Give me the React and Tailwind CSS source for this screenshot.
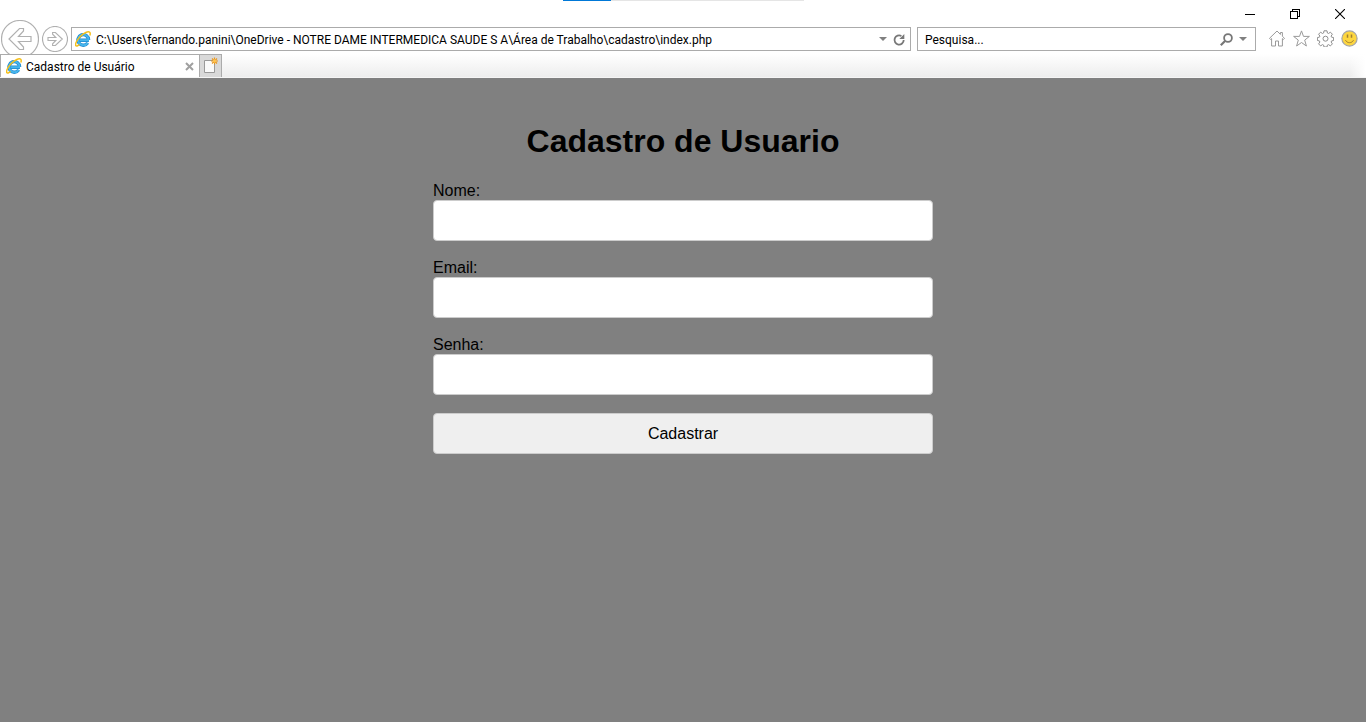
import React from "react";

function BrowserLogo() {
  return (
    <svg viewBox="0 0 16 16" className="size-4 shrink-0" fill="none" aria-hidden="true">
      <path d="M13.900 9.300H4.500M13.600 8.900a5.300 5.300 0 1 0-.9 3" stroke="#1e88cf" strokeWidth="3.400" />
      <path d="M13.900 9.300H4.500M13.600 8.900a5.300 5.300 0 1 0-.9 3" stroke="#45b5ec" strokeWidth="2" />
      <path
        d="M4.500 13.500c-1.700 1.600-3.200 2-3.700 1.200C-.1 13.100 1.900 8.900 5.300 5.400 8.900 1.800 13.200-.1 14.700 1.300c.7.700.6 1.900.1 3.300"
        stroke="#f5bf1b"
        strokeWidth="1.500"
      />
    </svg>
  );
}

function CircleArrow({ className, r, flip }) {
  const c = r + 0.5;
  const size = c * 2;
  return (
    <svg viewBox={`0 0 ${size} ${size}`} className={className} fill="none" stroke="#b0b0b0" aria-hidden="true">
      <circle cx={c} cy={c} r={r} fill="#fff" strokeWidth="1.200" />
      {flip ? (
        <path d="M6 11.500h7.800L10.600 8.200V6.500h2.800l6.900 6.500-6.900 6.500h-2.800v-1.700l3.200-3.300H6z" strokeWidth="1.100" />
      ) : (
        <path d="M30 16.500H17.500L22.500 11V8.500h-4L8 19l10.500 10.500h4V27l-5-5.500H30z" strokeWidth="1.200" />
      )}
    </svg>
  );
}

function Caret() {
  return (
    <svg viewBox="0 0 8 4" className="h-1 w-2" aria-hidden="true">
      <path d="M0 0h8L4 4z" fill="#808080" />
    </svg>
  );
}

function WindowControls() {
  return (
    <div className="flex h-5 items-end justify-end gap-[35px] pr-[21px] pb-px">
      <button type="button" aria-label="Minimizar">
        <svg viewBox="0 0 10 10" className="block size-[10px]" shapeRendering="crispEdges">
          <path d="M0 5.500h10" stroke="#000" />
        </svg>
      </button>
      <button type="button" aria-label="Restaurar">
        <svg viewBox="0 0 10 10" className="block size-[10px]" fill="none" stroke="#000" shapeRendering="crispEdges">
          <path d="M.5 2.500h7v7h-7zM2.500 2.500v-2h7v7h-2" />
        </svg>
      </button>
      <button type="button" aria-label="Fechar">
        <svg viewBox="0 0 10 10" className="block size-[10px]" stroke="#000" strokeWidth="1.100">
          <path d="M0 0l10 10M10 0L0 10" />
        </svg>
      </button>
    </div>
  );
}

function Toolbar() {
  return (
    <div className="flex h-[34px] items-start overflow-hidden pr-2 pl-px">
      <button type="button" aria-label="Voltar" className="shrink-0">
        <CircleArrow r={18.5} className="block size-[38px]" />
      </button>
      <button type="button" aria-label="Avançar" className="mt-[6px] ml-[3px] shrink-0">
        <CircleArrow r={12.5} flip className="block size-[26px]" />
      </button>
      <div className="mt-[7px] ml-[3px] flex h-6 flex-1 items-center border border-[#ababab] bg-white pr-[4px] pl-[3px]">
        <BrowserLogo />
        <input
          type="text"
          aria-label="Endereço"
          defaultValue="C:\Users\fernando.panini\OneDrive - NOTRE DAME INTERMEDICA SAUDE S A\Área de Trabalho\cadastro\index.php"
          className="ml-[5px] min-w-0 flex-1 bg-transparent pt-[2px] outline-none"
        />
        <button type="button" aria-label="Mostrar endereços" className="flex">
          <Caret />
        </button>
        <button type="button" aria-label="Atualizar" className="ml-[6px]">
          <svg viewBox="0 0 13 13" className="block size-[13px]" aria-hidden="true">
            <path d="M10.700 7a4.600 4.600 0 1 1-2.300-4" fill="none" stroke="#777" strokeWidth="1.800" />
            <path d="M11.300 1v5H6.300z" fill="#777" />
          </svg>
        </button>
      </div>
      <div className="mt-[7px] ml-[6px] flex h-6 w-[339px] shrink-0 items-center border border-[#ababab] bg-white pr-[8px] pl-[7px]">
        <input
          type="text"
          aria-label="Pesquisar"
          placeholder="Pesquisa..."
          className="min-w-0 flex-1 bg-transparent pt-[2px] outline-none placeholder:text-black"
        />
        <button type="button" aria-label="Buscar">
          <svg viewBox="0 0 13 13" className="block size-[13px]" fill="none" stroke="#777" aria-hidden="true">
            <circle cx="8" cy="5" r="3.900" strokeWidth="1.800" />
            <path d="M5 8L.8 12.200" strokeWidth="2.200" />
          </svg>
        </button>
        <button type="button" aria-label="Opções de pesquisa" className="ml-[6px] flex">
          <Caret />
        </button>
      </div>
      <div className="mt-[10px] ml-[13px] flex shrink-0 gap-[7px]">
        <button type="button" aria-label="Página inicial">
          <svg viewBox="0 0 17 17" className="block size-[17px]" fill="none" stroke="#9a9a9a" aria-hidden="true">
            <path d="M8 1L.5 8.300l1.100 1.200 1-.9v7.400h3.900v-5h3v5h3.900V8.600l1 .9 1.100-1.200-2.100-2V2.500h-2v1.900z" />
          </svg>
        </button>
        <button type="button" aria-label="Favoritos">
          <svg viewBox="0 0 17 17" className="block size-[17px]" fill="none" stroke="#9a9a9a" aria-hidden="true">
            <path d="M8.500.9l2 5.500h5.900l-4.700 3.700 1.700 5.900-4.900-3.500L3.600 16l1.700-5.900L.6 6.400h5.900z" />
          </svg>
        </button>
        <button type="button" aria-label="Ferramentas">
          <svg viewBox="0 0 17 17" className="block size-[17px]" fill="none" stroke="#8f8f8f" aria-hidden="true">
            <path d="M7 .8h3l.4 2.200 1.100.5 1.900-1.300 2 2-1.300 1.900.5 1.100 2 .3v3l-2 .4-.5 1.100 1.300 1.900-2 2-1.900-1.300-1.100.5-.4 1.900H7l-.4-1.900-1.100-.5-1.900 1.300-2-2 1.300-1.900-.5-1.100-2-.4v-3l2-.3.500-1.100-1.300-1.900 2-2 1.900 1.300L6.600 3z" />
            <circle cx="8.500" cy="8.700" r="2.500" />
          </svg>
        </button>
        <button type="button" aria-label="Enviar comentários">
          <svg viewBox="0 0 17 17" className="block size-[17px]" aria-hidden="true">
            <circle cx="8.500" cy="8.500" r="7.600" fill="#fdd640" stroke="#a5a5a5" strokeWidth="1.200" />
            <path d="M6.500 4.500v3.200M10.500 4.500v3.200" stroke="#a08030" strokeWidth="1.500" />
            <path d="M4.500 10.200c1.600 3.300 6.400 3.300 8 0" fill="none" stroke="#a08030" />
          </svg>
        </button>
      </div>
    </div>
  );
}

function TabStrip() {
  return (
    <div className="flex h-6 border-b border-[#f5f5f5] bg-linear-to-b from-white to-[#ededed]">
      <div className="flex w-[200px] items-center border border-b-0 border-[#ababab] bg-white px-[5px]">
        <BrowserLogo />
        <span className="ml-1 flex-1 truncate pt-[2px]">Cadastro de Usuário</span>
        <button type="button" aria-label="Fechar guia">
          <svg viewBox="0 0 9 9" className="block size-[9px]" stroke="#a0a0a0" strokeWidth="2" aria-hidden="true">
            <path d="M1 1l7 7M8 1L1 8" />
          </svg>
        </button>
      </div>
      <button
        type="button"
        aria-label="Nova guia"
        className="flex w-[22px] justify-center border border-b-0 border-l-0 border-[#ababab] bg-[#d9d9d9] pt-[2px]"
      >
        <svg viewBox="0 0 16 17" className="h-[17px] w-4" aria-hidden="true">
          <path d="M1.500 3.500h10v12h-10z" fill="#fafafa" stroke="#9a9a9a" />
          <path d="M11.500.5v7M8 4h7M9 1.500l5 5M14 1.500l-5 5" stroke="#e8961e" strokeWidth="1.100" />
          <circle cx="11.500" cy="4" r="1.700" fill="#ffc34d" />
        </svg>
      </button>
      <div className="ml-auto w-4 bg-linear-to-r from-transparent to-white" />
    </div>
  );
}

function Field({ id, label, type }) {
  return (
    <div className="flex flex-col">
      <label htmlFor={id} className="leading-[18px]">
        {label}
      </label>
      <input
        id={id}
        name={id}
        type={type}
        className="h-[41px] w-full rounded-[4px] border border-[#cccccc] bg-white px-[10px] outline-none"
      />
    </div>
  );
}

export default function App() {
  return (
    <div className="flex min-h-screen flex-col bg-[#808080]">
      <header className="relative bg-white font-[Roboto,'Noto_Sans',sans-serif] text-[12px] text-black">
        <div className="absolute top-0 left-[563px] flex h-px w-[241px] bg-[#e5e5e5]">
          <div className="w-12 bg-[#0078d7]" />
        </div>
        <WindowControls />
        <Toolbar />
        <TabStrip />
      </header>
      <main className="flex-1 px-4 pt-11 font-['Liberation_Sans',Arial,sans-serif] text-base text-black">
        <h1 className="mb-[22px] text-center text-[32px] leading-[38px] font-bold">Cadastro de Usuario</h1>
        <form className="mx-auto flex max-w-[500px] flex-col gap-[18px]" onSubmit={(e) => e.preventDefault()}>
          <Field id="nome" label="Nome:" type="text" />
          <Field id="email" label="Email:" type="email" />
          <Field id="senha" label="Senha:" type="password" />
          <button type="submit" className="h-[41px] rounded-[4px] border border-[#cccccc] bg-[#efefef]">
            Cadastrar
          </button>
        </form>
      </main>
    </div>
  );
}
